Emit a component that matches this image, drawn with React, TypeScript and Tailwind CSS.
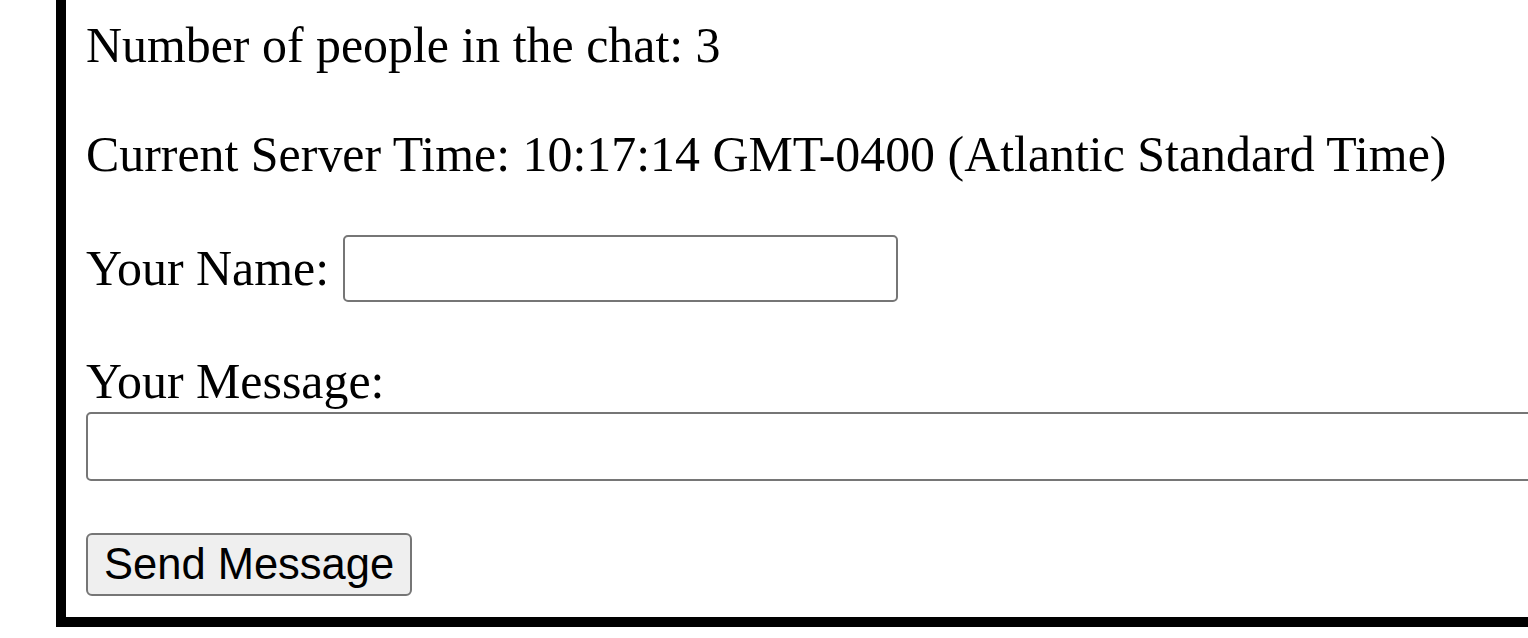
export default function App() {
  return (
    <div className="w-full h-[638px] overflow-hidden bg-white">
      <div
        className="ml-[56px] w-[1600px] border-l-[10px] border-b-[10px] border-black pl-[20px] pt-[18px] pb-[21px] text-black text-[49.9px]"
        style={{ fontFamily: '"Liberation Serif", "Times New Roman", serif' }}
      >
        {/* Chat stats */}
        <p className="leading-[56px]">Number of people in the chat: 3</p>
        <p className="leading-[56px] mt-[53px]">
          Current Server Time: 10:17:14 GMT-0400 (Atlantic Standard Time)
        </p>

        {/* Name field */}
        <div className="flex items-center h-[67px] mt-[52px]">
          <span className="leading-[56px]">Your Name:</span>
          <input
            type="text"
            className="ml-[14px] w-[555px] h-[67px] border-2 border-[#767676] rounded-[5px] bg-white outline-none"
          />
        </div>

        {/* Message field */}
        <p className="leading-[56px] mt-[52px]">Your Message:</p>
        <input
          type="text"
          className="block mt-[2px] w-[1500px] h-[69px] border-2 border-[#767676] rounded-[5px] bg-white outline-none"
        />

        {/* Submit */}
        <button
          className="mt-[52px] h-[63px] px-[16px] flex items-center bg-[#efefef] border-2 border-[#767676] rounded-[6px] text-[43.5px] leading-none"
          style={{ fontFamily: '"Liberation Sans", Arial, sans-serif' }}
        >
          Send Message
        </button>
      </div>
    </div>
  );
}
